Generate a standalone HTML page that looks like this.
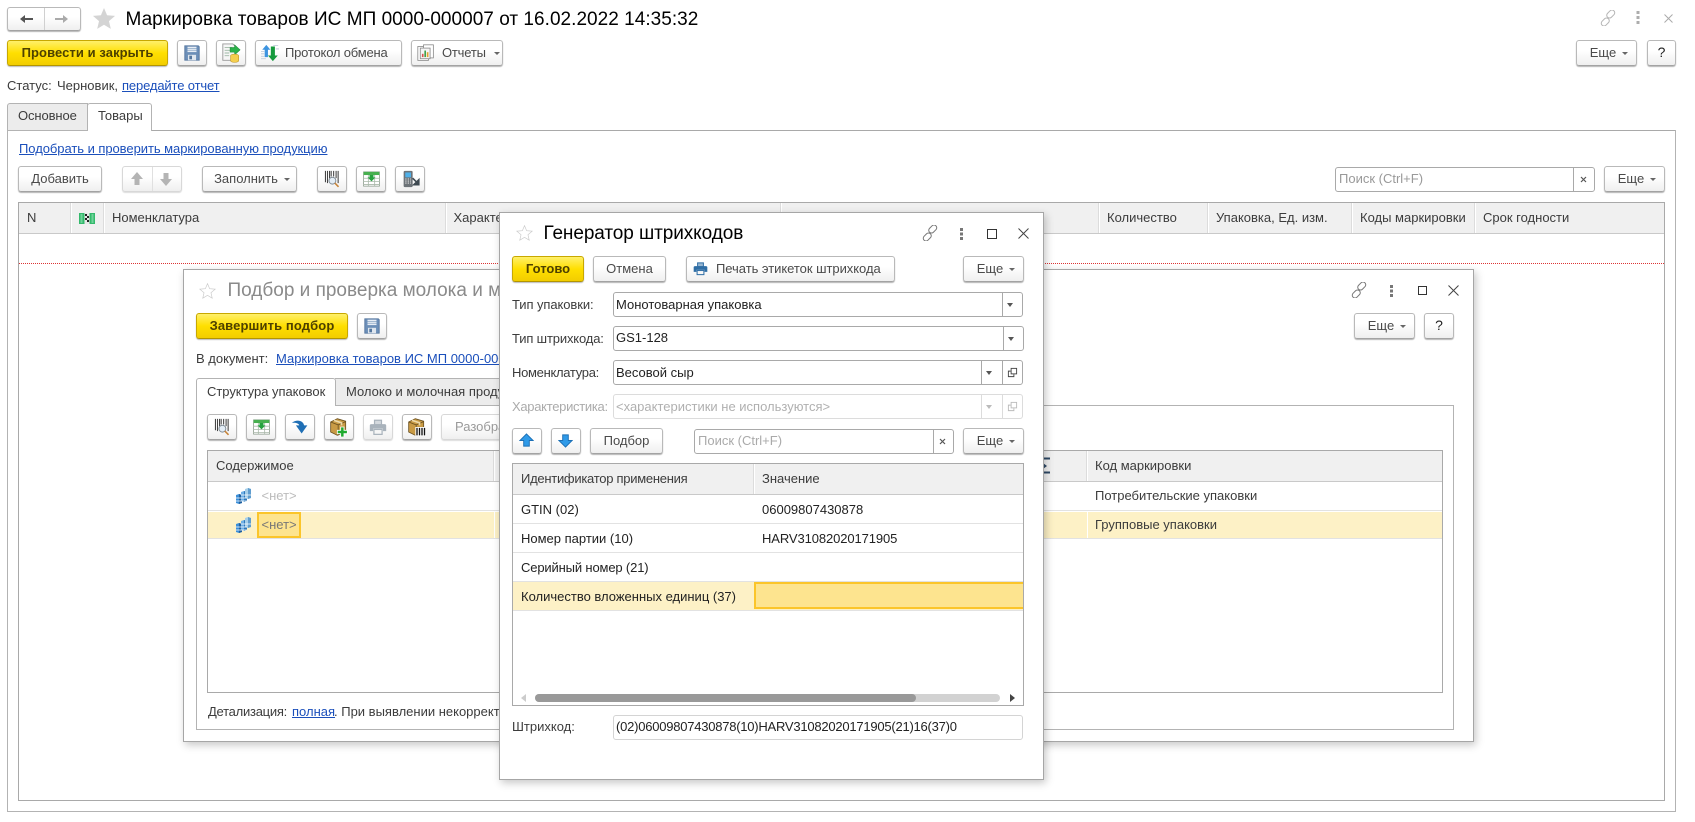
<!DOCTYPE html>
<html lang="ru"><head><meta charset="utf-8"><title>Маркировка товаров</title>
<style>
html,body{margin:0;padding:0;background:#fff}
body{position:relative;width:1695px;height:822px;overflow:hidden;font:13px/16px "Liberation Sans",Arial,sans-serif;color:#333}
div,a,span.a{box-sizing:border-box}
.t{position:absolute;white-space:nowrap;line-height:16px;color:#3c3c3c}
.l{color:#1b4fbb;text-decoration:underline}
.b{position:absolute;height:26px;border:1px solid #b9b9b9;border-bottom-color:#a3a3a3;border-radius:3px;background:linear-gradient(#fff,#fff 40%,#efefef);box-shadow:0 1px 1px #b5b5b5;color:#4a4a4a;text-align:center;line-height:23px;white-space:nowrap}
.y{background:linear-gradient(#fff06a,#ffdf00 50%,#f2cd00);border-color:#c8a800;border-bottom-color:#b39500;box-shadow:0 1px 1px #bbb;color:#4d4000;font-weight:bold}
.dis{box-shadow:0 1px 1px #ddd;border-color:#d8d8d8}
.c{display:inline-block;width:0;height:0;border:3px solid transparent;border-top:3.5px solid #666;border-bottom:0;vertical-align:2px;margin-left:6px}
.m{padding-left:5px}
.f{position:absolute;border:1px solid #a9a9a9;border-radius:3px;background:#fff}
.d{position:absolute;top:0;bottom:0;width:1px;background:#a9a9a9}
.ar{position:absolute;width:0;height:0;border:3.5px solid transparent;border-top:4px solid #555;border-bottom:0;top:10px}
.win{position:absolute;background:#fff;border:1px solid #a6a6a6;box-shadow:2px 3px 8px rgba(0,0,0,.22)}
.ln{position:absolute;background:#a9a9a9}
.hd{position:absolute;background:#f0f0f0}
.sep{position:absolute;width:1px;background:#fff;box-shadow:-1px 0 0 #dcdcdc}
svg{position:absolute;overflow:visible}
</style></head><body>
<svg width="0" height="0" style="position:absolute">
<defs>
<symbol id="star" viewBox="0 0 24 24"><path d="M12 1l3.2 7.6 8.3.7-6.3 5.4 1.9 8.1L12 18.500l-7.100 4.300 1.900-8.100L.5 9.300l8.300-.7z"/></symbol>
<symbol id="save" viewBox="0 0 20 20"><path d="M2 2h15l1 1v15H2z" fill="#6c8fb8" stroke="#54769e"/><rect x="5" y="3" width="10" height="6" fill="#e8eef5"/><rect x="5" y="4.500" width="10" height="1" fill="#9bb2cd"/><rect x="5" y="6.500" width="10" height="1" fill="#9bb2cd"/><rect x="5.500" y="12" width="9" height="6" fill="#dfe6ee"/><rect x="7" y="13" width="3" height="4" fill="#54769e"/></symbol>
<symbol id="post" viewBox="0 0 22 22"><path d="M2 1h11l3 3v15H2z" fill="#f6f6f6" stroke="#999"/><path d="M4 5h8M4 8h6M4 11h5M4 14h5" stroke="#9fb8a5"/><path d="M10 5h5V2l6 5.500-6 5.500V10h-5z" fill="#2bb24a" stroke="#1c8a37" stroke-width=".6"/><ellipse cx="15" cy="14" rx="4.500" ry="1.800" fill="#f5cf4e" stroke="#b8902a" stroke-width=".6"/><path d="M10.500 14v5.500c0 1 2 1.800 4.500 1.800s4.500-.8 4.500-1.800V14" fill="#f5cf4e" stroke="#b8902a" stroke-width=".6"/></symbol>
<symbol id="xch" viewBox="0 0 22 22"><path d="M0 9h4M0 12h4M0 15h4M0 18h6M15 2h6M18 6h4" stroke="#b9c6d6"/><path d="M4.500 16V7H1.500L6.500 1l5 6H8.500v9z" fill="#3d94e0"/><path d="M12 3h5v11h3.500L14.500 21l-6-7H12z" fill="#159a3d"/></symbol>
<symbol id="rep" viewBox="0 0 22 22"><rect x="1" y="3" width="13" height="17" fill="#fff" stroke="#8a8a8a"/><rect x="8" y="1" width="12" height="16" fill="#fff" stroke="#8a8a8a"/><rect x="4" y="5" width="12" height="13" fill="#f5f5f5" stroke="#8a8a8a"/><rect x="6" y="12" width="2" height="4" fill="#d9534f"/><rect x="9" y="8" width="2" height="8" fill="#3da14c"/><rect x="12" y="10" width="2" height="6" fill="#e0a52e"/></symbol>
<symbol id="bc" viewBox="0 0 22 22"><path d="M3 1v14M5.500 1v15M8 1v9M10 1v7M13 1v7M16 1v9M18.500 1v15" stroke="#444" stroke-width="1.300"/><circle cx="11.500" cy="13" r="4.200" fill="#e4eef7" stroke="#7f8b95" stroke-width="1.200"/><path d="M14.500 16l4.500 4.500" stroke="#c8863c" stroke-width="2"/></symbol>
<symbol id="tbl" viewBox="0 0 24 22"><rect x="2" y="2" width="20" height="18" fill="#fff" stroke="#8c9c8c"/><rect x="2" y="2" width="20" height="4" fill="#47b04f"/><path d="M2 10h20M2 14h20M2 18h20M8 6v14M16 6v14" stroke="#a9b8a9"/><path d="M9.500 6h5v3H17l-5 5-5-5h2.500z" fill="#27a23f"/></symbol>
<symbol id="hh" viewBox="0 0 24 22"><rect x="3" y="1" width="11" height="20" rx="1.500" fill="#6d7378"/><rect x="5" y="3" width="7" height="6" fill="#4fb0e8"/><path d="M5 11h1.500M8 11h1.500M11 11h1M5 13.500h1.500M8 13.500h1.500M11 13.500h1M5 16h1.500M8 16h1.500M11 16h1" stroke="#e6e6e6" stroke-width="1.300"/><path d="M14 10l6 6M21.500 12v6h-6z" stroke="#3f4a52" stroke-width="2" fill="#3f4a52"/></symbol>
<symbol id="turn" viewBox="0 0 22 22"><path d="M1 6C7 1 15 3 16 9h4l-7 10L6 9h4C10 7 6 5 1 6z" fill="#1f6fb5"/></symbol>
<symbol id="boxp" viewBox="0 0 24 24"><path d="M2 6l8-4 10 3v13l-10 4-8-4z" fill="#c99b45" stroke="#6b5120"/><path d="M2 6l9 3.500 9-4M11 9.500V22" stroke="#6b5120" fill="none"/><path d="M6 4l9 3v3" stroke="#ecd9a9" stroke-width="2" fill="none"/><path d="M14 12h4v4h4v4h-4v4h-4v-4h-4v-4h4z" fill="#1faa2f" stroke="#fff"/></symbol>
<symbol id="prt" viewBox="0 0 22 22"><rect x="6" y="2" width="10" height="6" fill="currentColor"/><rect x="7.500" y="3.500" width="7" height="4" fill="#fff" opacity=".5"/><path d="M1 9c0-1 1-1.500 2-1.500h16c1 0 2 .5 2 1.500v7h-4v-3H5v3H1z" fill="currentColor"/><rect x="6" y="14" width="10" height="6" fill="none" stroke="currentColor" stroke-width="1.500"/></symbol>
<symbol id="boxb" viewBox="0 0 24 24"><path d="M2 6l8-4 10 3v13l-10 4-8-4z" fill="#c99b45" stroke="#6b5120"/><path d="M2 6l9 3.500 9-4M11 9.500V22" stroke="#6b5120" fill="none"/><path d="M6 4l9 3v3" stroke="#ecd9a9" stroke-width="2" fill="none"/><rect x="10" y="12" width="13" height="11" fill="#fff"/><path d="M12 13v9M15 13v9M18 13v9M21 13v9" stroke="#111" stroke-width="1.600"/></symbol>
<symbol id="stack" viewBox="0 0 15 16"><path d="M0 7l3-1 3 1v8l-3 1-3-1z" fill="#3c8fd8"/><path d="M3 6l3 1v8l-3 1z" fill="#1f5f9e"/><path d="M5 4l3-1 3 1v9l-3 1-3-1z" fill="#6fb0e6"/><path d="M8 3l3 1v9l-3 1z" fill="#2f78ba"/><path d="M9 1l3-1 3 1v9l-3 1-3-1z" fill="#a7cfe9"/><path d="M12 0l3 1v9l-3 1z" fill="#5f9dcf"/><path d="M0 10h11M0 13h11M5 7h10" stroke="#fff" stroke-width=".8"/></symbol>
<symbol id="link" viewBox="0 0 16 16"><g fill="none" stroke="currentColor" stroke-width="1"><rect x="8" y="-.5" width="5.500" height="9" rx="2.700" transform="rotate(45 10.700 4)"/><rect x="2.500" y="7.500" width="5.500" height="9" rx="2.700" transform="rotate(45 5.300 12)"/></g></symbol>
<symbol id="open" viewBox="0 0 12 12"><g fill="none" stroke="currentColor" stroke-width="1"><rect x="4.500" y="1.500" width="6" height="6"/><path d="M4 4.500H1.500v6h6V8"/></g></symbol>
<symbol id="up" viewBox="0 0 16 16"><path d="M8 1l7 7h-4v6H5V8H1z" fill="#2f9ae8" stroke="#1b6fb5"/></symbol>
<symbol id="dn" viewBox="0 0 16 16"><path d="M8 15L1 8h4V2h6v6h4z" fill="#2f9ae8" stroke="#1b6fb5"/></symbol>
</defs></svg>

<!-- MAIN -->
<div class="b" style="left:7px;top:7px;width:74px;height:24px"></div>
<div class="ln" style="left:44px;top:8px;width:1px;height:22px;background:#d0d0d0"></div>
<svg style="left:20px;top:15px" width="13" height="8"><path d="M0 4l5-4v3h8v2H5v3z" fill="#555"/></svg>
<svg style="left:55px;top:15px" width="13" height="8"><path d="M13 4L8 0v3H0v2h8v3z" fill="#aaa"/></svg>
<svg style="left:92px;top:7px;fill:#d4d4d4" width="24" height="23"><use href="#star"/></svg>
<div class="t" style="left:125.500px;top:9px;font-size:19px;line-height:22px;color:#000;letter-spacing:.03px">Маркировка товаров ИС МП 0000-000007 от 16.02.2022 14:35:32</div>
<svg style="left:1600px;top:10px;color:#b5b5b5" width="16" height="16"><use href="#link"/></svg>
<svg style="left:1636px;top:11px" width="5" height="13"><path d="M.5 0h3v3h-3zM.5 5h3v3h-3zM.5 10h3v3h-3z" fill="#adadad"/></svg>
<svg style="left:1664px;top:14px" width="9" height="9"><path d="M.5.5l8 8M8.500.5l-8 8" stroke="#aaa" fill="none"/></svg>

<div class="b y" style="left:7px;top:40px;width:161px;letter-spacing:.08px">Провести и закрыть</div>
<div class="b" style="left:177px;top:40px;width:30px"></div><svg style="left:183px;top:44px" width="18" height="18"><use href="#save"/></svg>
<div class="b" style="left:216px;top:40px;width:30px"></div><svg style="left:221px;top:43px" width="20" height="20"><use href="#post"/></svg>
<div class="b" style="left:255px;top:40px;width:147px;text-align:left;padding-left:29px;letter-spacing:-.2px">Протокол обмена</div><svg style="left:261px;top:44px" width="18" height="18"><use href="#xch"/></svg>
<div class="b" style="left:411px;top:40px;width:92px;text-align:left;padding-left:30px;letter-spacing:-.2px">Отчеты<i class="c" style="margin-left:8px"></i></div><svg style="left:417px;top:44px" width="18" height="18"><use href="#rep"/></svg>
<div class="b m" style="left:1576px;top:40px;width:61px">Еще<i class="c"></i></div>
<div class="b" style="left:1647px;top:40px;width:29px;color:#222;font-size:14px">?</div>

<div class="t" style="left:7px;top:78px">Статус:</div>
<div class="t" style="left:57px;top:78px">Черновик,</div>
<a class="t l" style="left:122px;top:78px;letter-spacing:-.14px">передайте отчет</a>

<div class="ln" style="left:7px;top:130px;width:1669px;height:1px"></div>
<div style="position:absolute;left:7px;top:103px;width:81px;height:28px;background:#ececec;border:1px solid #b3b3b3;border-radius:3px 0 0 0"></div>
<div class="t" style="left:18px;top:108px;letter-spacing:-.1px">Основное</div>
<div style="position:absolute;left:87px;top:103px;width:65px;height:28px;background:#fff;border:1px solid #b3b3b3;border-bottom:0;border-radius:3px 3px 0 0"></div>
<div class="t" style="left:98px;top:108px">Товары</div>
<div style="position:absolute;left:7px;top:130px;width:1669px;height:682px;border:1px solid #b3b3b3;border-top:0"></div>
<div style="position:absolute;left:88px;top:130px;width:63px;height:1px;background:#fff"></div>

<a class="t l" style="left:19px;top:141px;letter-spacing:-.05px">Подобрать и проверить маркированную продукцию</a>

<div class="b" style="left:18px;top:166px;width:84px">Добавить</div>
<div class="b dis" style="left:122px;top:166px;width:60px"></div>
<div class="ln" style="left:152px;top:167px;width:1px;height:24px;background:#e0e0e0"></div>
<svg style="left:131px;top:172px" width="12" height="14"><path d="M6 0l6 7H8.500v6h-5V7H0z" fill="#b4b4b4"/></svg>
<svg style="left:160px;top:172px" width="12" height="14"><path d="M6 14l6-7H8.500V1h-5v6H0z" fill="#b4b4b4"/></svg>
<div class="b m" style="left:202px;top:166px;width:95px">Заполнить<i class="c"></i></div>
<div class="b" style="left:317px;top:166px;width:30px"></div><svg style="left:323px;top:170px" width="18" height="18"><use href="#bc"/></svg>
<div class="b" style="left:356px;top:166px;width:30px"></div><svg style="left:362px;top:170px" width="19" height="18"><use href="#tbl"/></svg>
<div class="b" style="left:395px;top:166px;width:30px"></div><svg style="left:401px;top:170px" width="20" height="18"><use href="#hh"/></svg>

<div class="f" style="left:1335px;top:167px;width:260px;height:25px"><div class="d" style="left:237px"></div></div>
<div class="t" style="left:1339px;top:171px;color:#999">Поиск (Ctrl+F)</div>
<svg style="left:1580px;top:176px" width="7" height="7"><path d="M1 1l5 5M6 1L1 6" stroke="#555" stroke-width="1.200"/></svg>
<div class="b m" style="left:1604px;top:166px;width:61px">Еще<i class="c"></i></div>

<!-- main table -->
<div style="position:absolute;left:18px;top:202px;width:1647px;height:599px;border:1px solid #a9a9a9;background:#fff"></div>
<div class="hd" style="left:19px;top:203px;width:1645px;height:30px"></div>
<div class="ln" style="left:19px;top:233px;width:1645px;height:1px;background:#c9c9c9"></div>
<div class="sep" style="left:71px;top:203px;height:30px"></div>
<div class="sep" style="left:104px;top:203px;height:30px"></div>
<div class="sep" style="left:446px;top:203px;height:30px"></div>
<div class="sep" style="left:781px;top:203px;height:30px"></div>
<div class="sep" style="left:1099px;top:203px;height:30px"></div>
<div class="sep" style="left:1208px;top:203px;height:30px"></div>
<div class="sep" style="left:1352px;top:203px;height:30px"></div>
<div class="sep" style="left:1475px;top:203px;height:30px"></div>
<div class="t" style="left:27px;top:210px">N</div>
<svg style="left:79px;top:213px" width="16" height="11"><rect width="16" height="11" fill="#34b96c"/><rect x="1.500" y="1" width="2" height="9" fill="#6fd39a"/><rect x="12.500" y="1" width="2" height="9" fill="#6fd39a"/><rect x="5.500" y="0" width="5" height="11" fill="#e8e8e8"/><path d="M6 1h2v2H6zM8 3h2v2H8zM6 5h2v2H6zM8 7h2v2H8z" fill="#222"/></svg>
<div class="t" style="left:112px;top:210px">Номенклатура</div>
<div class="t" style="left:453.500px;top:210px">Характеристика</div>
<div class="t" style="left:1107px;top:210px">Количество</div>
<div class="t" style="left:1216px;top:210px">Упаковка, Ед. изм.</div>
<div class="t" style="left:1360px;top:210px">Коды маркировки</div>
<div class="t" style="left:1483px;top:210px">Срок годности</div>
<div style="position:absolute;left:19px;top:263px;width:1645px;height:1px;border-top:1px dotted #d33"></div>

<!-- BACK DIALOG -->
<div class="win" style="left:183px;top:269px;width:1291px;height:473px"></div>
<svg style="left:199px;top:283px;fill:#fff;stroke:#c9c9c9" width="17" height="16"><use href="#star"/></svg>
<div class="t" style="left:227.500px;top:280px;font-size:19px;line-height:22px;color:#8a8a8a">Подбор и проверка молока и молочной продукции</div>
<svg style="left:1351px;top:282px;color:#777" width="16" height="16"><use href="#link"/></svg>
<svg style="left:1390px;top:285px" width="4" height="12"><path d="M0 0h3v3H0zM0 4.500h3v3H0zM0 9h3v3H0z" fill="#777"/></svg>
<div style="position:absolute;left:1418px;top:286px;width:9px;height:9px;border:1px solid #333"></div>
<svg style="left:1448px;top:285px" width="11" height="11"><path d="M.5.500l10 10M10.500.5l-10 10" stroke="#444" fill="none"/></svg>
<div class="b y" style="left:196px;top:313px;width:152px;letter-spacing:.12px">Завершить подбор</div>
<div class="b" style="left:357px;top:313px;width:30px"></div><svg style="left:363px;top:317px" width="18" height="18"><use href="#save"/></svg>
<div class="b m" style="left:1354px;top:313px;width:61px">Еще<i class="c"></i></div>
<div class="b" style="left:1424px;top:313px;width:30px;color:#222;font-size:14px">?</div>
<div class="t" style="left:196px;top:351px">В документ:</div>
<a class="t l" style="left:276px;top:351px">Маркировка товаров ИС МП 0000-000007 от 16.02.2022 14:35:32</a>

<div style="position:absolute;left:196px;top:405px;width:1258px;height:325px;border:1px solid #b3b3b3"></div>
<div style="position:absolute;left:335px;top:378px;width:300px;height:28px;background:#ececec;border:1px solid #b3b3b3;border-left:0"></div>
<div class="t" style="left:346px;top:384px">Молоко и молочная продукция</div>
<div style="position:absolute;left:196px;top:378px;width:140px;height:28px;background:#fff;border:1px solid #b3b3b3;border-bottom:0;border-radius:3px 3px 0 0"></div>
<div class="t" style="left:207px;top:384px;letter-spacing:-.03px">Структура упаковок</div>

<div class="b" style="left:207px;top:414px;width:30px"></div><svg style="left:213px;top:418px" width="18" height="18"><use href="#bc"/></svg>
<div class="b" style="left:246px;top:414px;width:30px"></div><svg style="left:252px;top:418px" width="19" height="18"><use href="#tbl"/></svg>
<div class="b" style="left:285px;top:414px;width:30px"></div><svg style="left:291px;top:418px" width="18" height="18"><use href="#turn"/></svg>
<div class="b" style="left:324px;top:414px;width:30px"></div><svg style="left:329px;top:417px" width="20" height="20"><use href="#boxp"/></svg>
<div class="b dis" style="left:363px;top:414px;width:30px"></div><svg style="left:369px;top:418px;color:#a9b3bc" width="18" height="18"><use href="#prt"/></svg>
<div class="b" style="left:402px;top:414px;width:30px"></div><svg style="left:407px;top:417px" width="20" height="20"><use href="#boxb"/></svg>
<div class="b dis" style="left:441px;top:414px;width:120px;color:#9a9a9a;text-align:left;padding-left:13px">Разобрать</div>

<div style="position:absolute;left:207px;top:450px;width:1236px;height:243px;border:1px solid #a9a9a9"></div>
<div class="hd" style="left:208px;top:451px;width:1234px;height:30px"></div>
<div class="ln" style="left:208px;top:481px;width:1234px;height:1px;background:#c9c9c9"></div>
<div class="sep" style="left:494px;top:451px;height:30px"></div>
<div class="sep" style="left:1087px;top:451px;height:30px"></div>
<div class="t" style="left:216px;top:458px">Содержимое</div>
<svg style="left:1043px;top:458px" width="8" height="16"><path d="M0 .5h7M0 14.500h7" stroke="#2f4a66" stroke-width="2"/><path d="M0 5l4 3-4 3z" fill="#2f4a66"/></svg>
<div class="t" style="left:1095px;top:458px">Код маркировки</div>
<div class="ln" style="left:208px;top:510px;width:1234px;height:1px;background:#e2e2e2"></div>
<div style="position:absolute;left:208px;top:512px;width:1234px;height:26px;background:#fdf1c6"></div>
<div class="ln" style="left:208px;top:538px;width:1234px;height:1px;background:#e2e2e2"></div>
<div class="sep" style="left:1087px;top:512px;height:26px;box-shadow:none"></div>
<div class="sep" style="left:494px;top:512px;height:26px;box-shadow:none"></div>
<svg style="left:236px;top:488px" width="15" height="16"><use href="#stack"/></svg>
<svg style="left:236px;top:517px" width="15" height="16"><use href="#stack"/></svg>
<div class="t" style="left:261.500px;top:488px;color:#bcbcbc">&lt;нет&gt;</div>
<div style="position:absolute;left:257px;top:512px;width:44px;height:26px;background:#fde48f;border:2px solid #fbc52a"></div>
<div class="t" style="left:261.500px;top:517px;color:#777">&lt;нет&gt;</div>
<div class="t" style="left:1095px;top:488px">Потребительские упаковки</div>
<div class="t" style="left:1095px;top:517px">Групповые упаковки</div>

<div class="t" style="left:208px;top:704px;letter-spacing:-.25px">Детализация:</div>
<a class="t l" style="left:292px;top:704px">полная</a>
<div class="t" style="left:334px;top:704px">. При выявлении некорректных данных</div>

<!-- FRONT DIALOG -->
<div class="win" style="left:499px;top:212px;width:545px;height:568px"></div>
<svg style="left:516px;top:225px;fill:#fff;stroke:#c9c9c9" width="17" height="16"><use href="#star"/></svg>
<div class="t" style="left:543.500px;top:223px;font-size:19px;line-height:22px;color:#000;letter-spacing:-.08px">Генератор штрихкодов</div>
<svg style="left:922px;top:225px;color:#777" width="16" height="16"><use href="#link"/></svg>
<svg style="left:960px;top:228px" width="4" height="12"><path d="M0 0h3v3H0zM0 4.500h3v3H0zM0 9h3v3H0z" fill="#777"/></svg>
<div style="position:absolute;left:987px;top:229px;width:10px;height:10px;border:1px solid #333"></div>
<svg style="left:1018px;top:228px" width="11" height="11"><path d="M.5.500l10 10M10.500.5l-10 10" stroke="#444" fill="none"/></svg>

<div class="b y" style="left:512px;top:256px;width:72px">Готово</div>
<div class="b" style="left:593px;top:256px;width:73px">Отмена</div>
<div class="b" style="left:686px;top:256px;width:209px;text-align:left;padding-left:29px;letter-spacing:-.04px">Печать этикеток штрихкода</div>
<svg style="left:693px;top:261px;color:#2f6ea5" width="15" height="15"><use href="#prt"/></svg>
<div class="b m" style="left:963px;top:256px;width:61px">Еще<i class="c"></i></div>

<div class="t" style="left:512px;top:297px;letter-spacing:-.08px">Тип упаковки:</div>
<div class="f" style="left:613px;top:292px;width:410px;height:25px"><div class="d" style="left:388px"></div><i class="ar" style="left:393px"></i></div>
<div class="t" style="left:616px;top:297px;color:#222">Монотоварная упаковка</div>

<div class="t" style="left:512px;top:331px;letter-spacing:-.15px">Тип штрихкода:</div>
<div class="f" style="left:613px;top:326px;width:411px;height:25px"><div class="d" style="left:389px"></div><i class="ar" style="left:394px"></i></div>
<div class="t" style="left:616px;top:330px;color:#222">GS1-128</div>

<div class="t" style="left:512px;top:365px;letter-spacing:-.3px">Номенклатура:</div>
<div class="f" style="left:613px;top:360px;width:410px;height:25px"><div class="d" style="left:367px"></div><div class="d" style="left:388px"></div><i class="ar" style="left:372px"></i></div>
<svg style="left:1007px;top:367px;color:#444" width="11" height="11"><use href="#open"/></svg>
<div class="t" style="left:616px;top:365px;color:#222">Весовой сыр</div>

<div class="t" style="left:512px;top:399px;color:#ababab;letter-spacing:-.3px">Характеристика:</div>
<div class="f" style="left:613px;top:394px;width:410px;height:25px;border-color:#dcdcdc"><div class="d" style="left:367px;background:#dcdcdc"></div><div class="d" style="left:388px;background:#dcdcdc"></div><i class="ar" style="left:372px;border-top-color:#bbb"></i></div>
<svg style="left:1007px;top:401px;color:#bbb" width="11" height="11"><use href="#open"/></svg>
<div class="t" style="left:616px;top:399px;color:#b0b0b0">&lt;характеристики не используются&gt;</div>

<div class="b" style="left:512px;top:428px;width:30px"></div><svg style="left:519px;top:433px" width="15" height="15"><use href="#up"/></svg>
<div class="b" style="left:551px;top:428px;width:30px"></div><svg style="left:558px;top:433px" width="15" height="15"><use href="#dn"/></svg>
<div class="b" style="left:590px;top:428px;width:73px">Подбор</div>
<div class="f" style="left:694px;top:429px;width:260px;height:25px"><div class="d" style="left:238px"></div></div>
<div class="t" style="left:698px;top:433px;color:#aaa">Поиск (Ctrl+F)</div>
<svg style="left:939px;top:438px" width="7" height="7"><path d="M1 1l5 5M6 1L1 6" stroke="#555" stroke-width="1.200"/></svg>
<div class="b m" style="left:963px;top:428px;width:61px">Еще<i class="c"></i></div>

<div style="position:absolute;left:512px;top:463px;width:512px;height:243px;border:1px solid #a9a9a9"></div>
<div class="hd" style="left:513px;top:464px;width:510px;height:30px"></div>
<div class="ln" style="left:513px;top:494px;width:510px;height:1px;background:#c9c9c9"></div>
<div class="sep" style="left:754px;top:464px;height:30px"></div>
<div class="t" style="left:521px;top:471px;letter-spacing:-.27px">Идентификатор применения</div>
<div class="t" style="left:762px;top:471px">Значение</div>
<div class="t" style="left:521px;top:502px;color:#222">GTIN (02)</div><div class="t" style="left:762px;top:502px;color:#222">06009807430878</div>
<div class="ln" style="left:513px;top:523px;width:510px;height:1px;background:#e2e2e2"></div>
<div class="t" style="left:521px;top:531px;color:#222">Номер партии (10)</div><div class="t" style="left:762px;top:531px;color:#222;letter-spacing:-.1px">HARV31082020171905</div>
<div class="ln" style="left:513px;top:552px;width:510px;height:1px;background:#e2e2e2"></div>
<div class="t" style="left:521px;top:560px;color:#222;letter-spacing:-.15px">Серийный номер (21)</div>
<div class="ln" style="left:513px;top:581px;width:510px;height:1px;background:#e2e2e2"></div>
<div style="position:absolute;left:513px;top:582px;width:510px;height:28px;background:#fdf1c6"></div>
<div class="ln" style="left:513px;top:610px;width:510px;height:1px;background:#e2e2e2"></div>
<div class="t" style="left:521px;top:589px;color:#222">Количество вложенных единиц (37)</div>
<div style="position:absolute;left:754px;top:582px;width:269px;height:27px;background:#fde48f;border:2px solid #fbc52a;border-right:0"></div>
<i style="position:absolute;left:521px;top:694px;width:0;height:0;border:4px solid transparent;border-right:5px solid #ccc;border-left:0"></i>
<div style="position:absolute;left:535px;top:694px;width:465px;height:8px;background:#d2d2d2;border-radius:4px"></div>
<div style="position:absolute;left:535px;top:694px;width:381px;height:8px;background:#999;border-radius:4px"></div>
<i style="position:absolute;left:1010px;top:694px;width:0;height:0;border:4px solid transparent;border-left:5px solid #444;border-right:0"></i>

<div class="t" style="left:512px;top:719px">Штрихкод:</div>
<div class="f" style="left:613px;top:715px;width:410px;height:25px;border-color:#d4d4d4"></div>
<div class="t" style="left:616px;top:719px;color:#222;letter-spacing:-.23px">(02)06009807430878(10)HARV31082020171905(21)16(37)0</div>
</body></html>
